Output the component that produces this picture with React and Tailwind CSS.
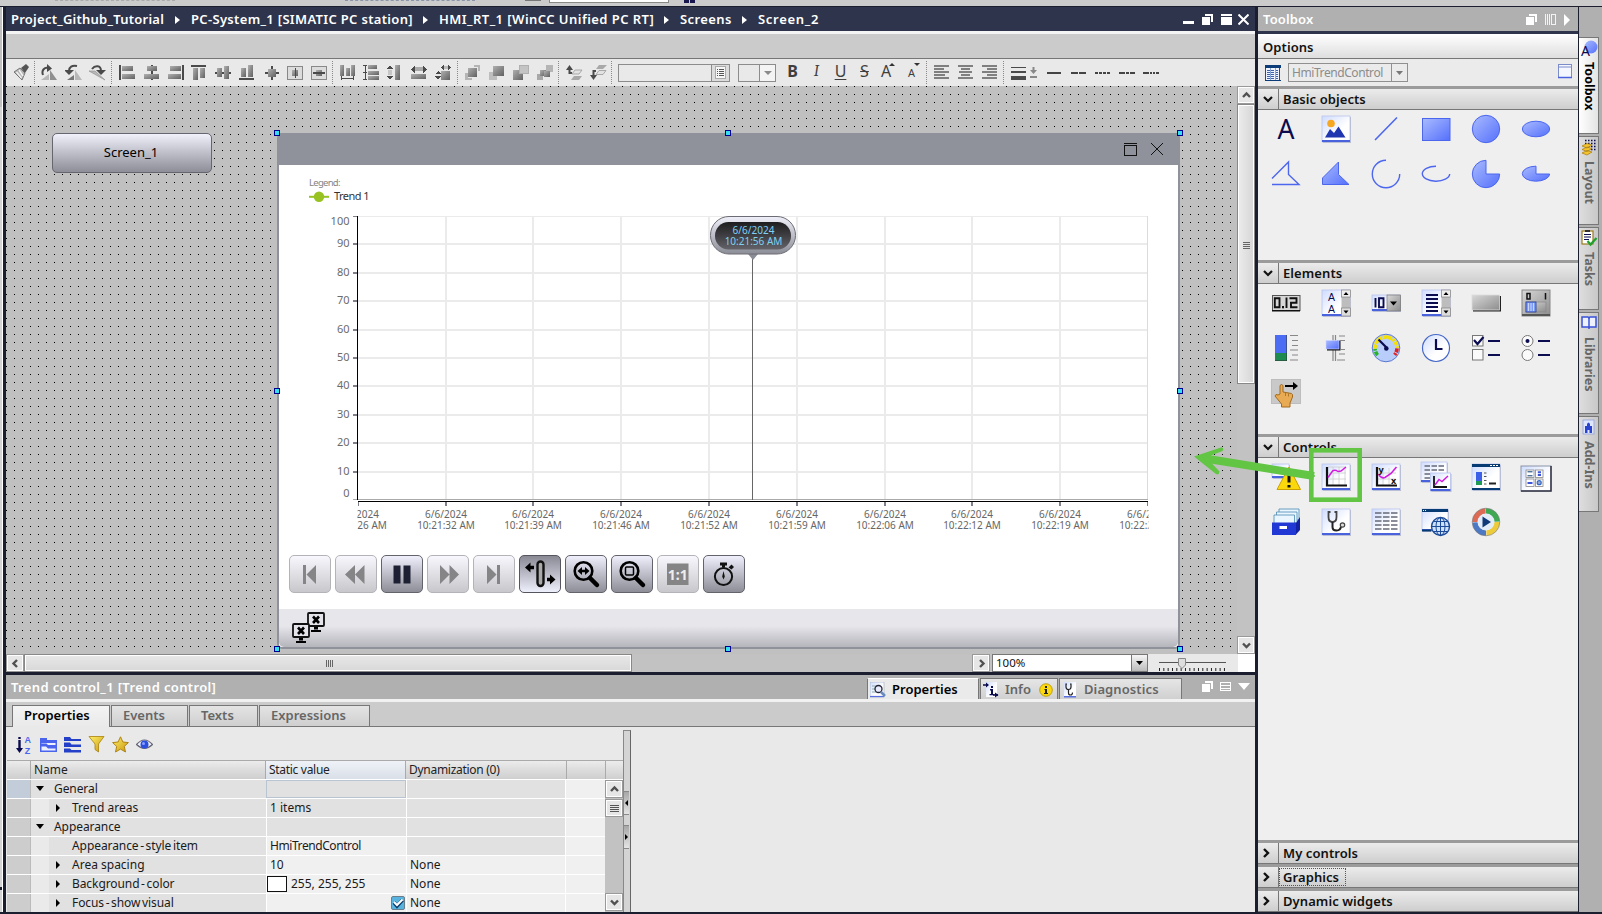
import React from "react";

const FONT = "font-['Noto_Sans','Open_Sans',sans-serif]";

/* ---------- shared gradients for every drawing ---------- */
function Defs() {
  return (
    <svg width="0" height="0" className="absolute">
      <defs>
        <linearGradient id="blue" x1="0" y1="0" x2="1" y2="1">
          <stop offset="0" stopColor="#a9bbff" />
          <stop offset="1" stopColor="#5570fb" />
        </linearGradient>
        <linearGradient id="tile" x1="0" y1="0" x2="1" y2="1">
          <stop offset="0" stopColor="#cfdcff" />
          <stop offset="0.6" stopColor="#ffffff" />
        </linearGradient>
        <linearGradient id="grey" x1="0" y1="0" x2="1" y2="1">
          <stop offset="0" stopColor="#d8d8d8" />
          <stop offset="1" stopColor="#8d8d8d" />
        </linearGradient>
        <linearGradient id="dark" x1="0" y1="0" x2="1" y2="1">
          <stop offset="0" stopColor="#b0b0b0" />
          <stop offset="1" stopColor="#606060" />
        </linearGradient>
        <linearGradient id="rim" x1="0" y1="0" x2="0" y2="1">
          <stop offset="0" stopColor="#f0f0fb" />
          <stop offset="1" stopColor="#8b8d96" />
        </linearGradient>
        <linearGradient id="core" x1="0" y1="0" x2="0" y2="1">
          <stop offset="0" stopColor="#1d1d1f" />
          <stop offset="1" stopColor="#626268" />
        </linearGradient>
        <linearGradient id="gold" x1="0" y1="0" x2="1" y2="1">
          <stop offset="0" stopColor="#fff06a" />
          <stop offset="1" stopColor="#c9960c" />
        </linearGradient>
      </defs>
    </svg>
  );
}

/* ---------- editor toolbar ---------- */
function T({ children, crisp = true }) {
  return (
    <svg className="h-[17px] w-[17px] shrink-0" viewBox="0 0 17 17" fill="url(#dark)" shapeRendering={crisp ? "crispEdges" : "auto"}>
      {children}
    </svg>
  );
}

function Sep({ className }) {
  return <div className={"h-[23px] w-0 shrink-0 border-l border-dotted border-[#8a8a8a] " + className} />;
}

const D = "#4a4a4a";

function Bars({ widths, align }) {
  return (
    <T>
      {widths.map((w, i) => (
        <rect key={i} x={align === "l" ? 1 : align === "r" ? 16 - w : (17 - w) / 2} y={1 + i * 3} width={w} height="2" fill="#808080" />
      ))}
    </T>
  );
}

function Dash({ d }) {
  return (
    <T>
      <path d="M0.5 9H16.5" stroke="#444" strokeWidth="2" strokeDasharray={d} fill="none" />
    </T>
  );
}

function EditorToolbar() {
  return (
    <div className="flex h-[27px] shrink-0 items-center bg-[#e9e9e9] pl-[7px]">
      <T crisp={false}>
        <path d="M1 8L7 4L12 9L9 16Z" fill="#b5b5b5" stroke="#777" />
        <path d="M3.500 8L8.500 14M6 6L10 12" stroke="#f2f2f2" strokeWidth="1.400" />
        <path d="M8 4L13 0L16 3L12 9Z" fill="#555" />
      </T>
      <Sep className="ml-1 mr-1.5" />
      <div className="flex gap-[7px]">
        <T crisp={false}>
          <path d="M16 16H9V6Z" fill="#8f8f8f" />
          <path d="M0 16H8V10Z" fill="#b8b8b8" />
          <path d="M2 11C0 6 4 3 7 4" stroke={D} strokeWidth="2" fill="none" />
          <path d="M6 0L11 4.500L6 8Z" fill={D} />
        </T>
        <T crisp={false}>
          <path d="M10 16H17L10 6Z" fill="#b8b8b8" />
          <path d="M2 16H9V11Z" fill="#777" />
          <path d="M12 2C7 1 4 3 4 7" stroke={D} strokeWidth="2" fill="none" />
          <path d="M-1 6H9L4 11Z" fill={D} />
        </T>
        <T crisp={false}>
          <path d="M0 7H6L16 16Z" fill="#b8b8b8" stroke="#8a8a8a" strokeWidth=".6" />
          <path d="M3 5C6 1 12 1 12 7" stroke={D} strokeWidth="2" fill="none" />
          <path d="M7 6H17L12 11Z" fill={D} />
        </T>
      </div>
      <Sep className="ml-[5px] mr-[7px]" />
      <div className="flex gap-[7px]">
        <T><rect x="0" y="1" width="2" height="15" fill={D} /><rect x="3" y="2" width="11" height="5" /><rect x="3" y="10" width="13" height="5" /></T>
        <T><rect x="8" y="1" width="2" height="15" fill={D} /><rect x="4" y="2" width="10" height="5" /><rect x="1" y="10" width="15" height="5" /></T>
        <T><rect x="15" y="1" width="2" height="15" fill={D} /><rect x="3" y="2" width="11" height="5" /><rect x="1" y="10" width="13" height="5" /></T>
        <T><rect x="0" y="1" width="15" height="2" fill={D} /><rect x="2" y="4" width="5" height="12" /><rect x="9" y="4" width="5" height="10" /></T>
        <T><rect x="0" y="8" width="16" height="2" fill={D} /><rect x="2" y="4" width="5" height="9" /><rect x="9" y="2" width="5" height="13" /></T>
        <T><rect x="0" y="14" width="15" height="2" fill={D} /><rect x="2" y="4" width="5" height="9" /><rect x="9" y="1" width="5" height="12" /></T>
        <T><rect x="8" y="2" width="2" height="14" fill={D} /><rect x="2" y="8" width="14" height="2" fill={D} /><rect x="5" y="5" width="8" height="8" /></T>
        <T><rect x=".5" y="2.500" width="15" height="13" fill="#dcdcdc" stroke="#888" /><rect x="5" y="6" width="6" height="6" /><rect x="8" y="4" width="1" height="10" fill={D} /></T>
        <T><rect x=".5" y="2.500" width="15" height="13" fill="#dcdcdc" stroke="#888" /><rect x="5" y="6" width="6" height="6" /><rect x="2" y="8" width="12" height="2" fill={D} /></T>
      </div>
      <Sep className="ml-1 mr-1.5" />
      <div className="flex gap-[7px]">
        <T><rect x="1" y="1" width="4" height="11" /><rect x="7" y="4" width="4" height="8" /><rect x="12" y="1" width="4" height="11" /><path d="M2.500 12v4M14.500 12v4M2 14.500h13" stroke={D} fill="none" /></T>
        <T><path d="M2.500 1v15M0 1.500h4M0 8.500h4M0 15.500h4" stroke={D} fill="none" /><rect x="5" y="1" width="9" height="4" /><rect x="5" y="7" width="11" height="4" /><rect x="5" y="12" width="11" height="4" /></T>
        <T><path d="M0 5L3 1L6 5ZM0 12L3 16L6 12Z" fill={D} /><rect x="1" y="6" width="4" height="5" fill="#c6c6c6" /><rect x="8" y="1" width="5" height="15" /></T>
        <T><path d="M0 5.500L4 2V9ZM16 5.500L12 2V9Z" fill={D} /><rect x="4" y="3" width="8" height="4" fill="#aaa" /><rect x="0" y="10" width="15" height="5" /></T>
        <T><path d="M6 3.500L9 0V7ZM16 3.500L13 0V7Z" fill={D} /><rect x="9" y="2" width="4" height="3" fill="#bbb" /><path d="M0 10L3 7L6 10ZM0 12L3 16L6 12Z" fill={D} /><rect x="6" y="7" width="9" height="9" /></T>
      </div>
      <Sep className="ml-[5px] mr-[7px]" />
      <div className="flex gap-[7px]">
        <T><path d="M0 9H3V14H7V16H0ZM9 1H15V7H13V3H9Z" fill="#b5b5b5" /><rect x="3" y="4" width="9" height="9" /></T>
        <T><rect x="0" y="8" width="8" height="8" fill="#bebebe" /><rect x="4" y="2" width="11" height="10" /></T>
        <T><rect x="0" y="6" width="10" height="10" /><rect x="6.500" y="1.500" width="9" height="8" fill="#c4c4c4" stroke="#b0b0b0" /></T>
        <T><rect x="9" y="1" width="7" height="7" fill="#b5b5b5" /><rect x="0" y="10" width="6" height="6" fill="#a8a8a8" /><rect x="3" y="6" width="6" height="6" /><rect x="7" y="7" width="6" height="6" /></T>
      </div>
      <Sep className="ml-1 mr-[7px]" />
      <div className="flex gap-[7px]">
        <T crisp={false}><path d="M0 6L3.500 1L7 6Z" fill={D} /><path d="M3.500 4V9H6" stroke={D} strokeWidth="2" fill="none" /><path d="M9 6H16L13 10H6Z" fill="#e2e2e2" stroke="#999" strokeWidth=".8" /><path d="M8 12H16L13 16H5Z" fill="#a8a8a8" /></T>
        <T crisp={false}><path d="M0 11L3.500 16L7 11Z" fill={D} /><path d="M3.500 13V7H6" stroke={D} strokeWidth="2" fill="none" /><path d="M9 1H17L13 5H6Z" fill="#a8a8a8" /><path d="M9 6.500H16L13 10.500H6Z" fill="#e2e2e2" stroke="#999" strokeWidth=".8" /></T>
      </div>
      <Sep className="ml-1 mr-1.5" />
      <div className="flex h-[18px] w-28 justify-end border border-[#8c8c8c] bg-[#e9e9e9]">
        <div className="flex w-[18px] items-center justify-center border-l border-[#8c8c8c] bg-[#dcdcdc]">
          <svg className="h-[13px] w-[11px]" viewBox="0 0 11 13" shapeRendering="crispEdges"><path d="M0.500 0.500H10.500V12.500H0.500Z" fill="#f6f6f6" stroke="#aaa" /><path d="M2 3.500h1M4 3.500h5M2 5.500h1M4 5.500h5M2 7.500h1M4 7.500h5M2 9.500h1M4 9.500h5" stroke="#555" /></svg>
        </div>
      </div>
      <div className="ml-2 flex h-[18px] w-[38px] justify-end border border-[#8c8c8c] bg-[#e9e9e9]">
        <div className="flex w-4 items-center justify-center border-l border-[#8c8c8c] bg-[#f4f4f4]">
          <svg className="h-1 w-2" viewBox="0 0 8 4"><path d="M0 0H8L4 4Z" fill="#8a8a8a" /></svg>
        </div>
      </div>
      <div className="ml-2 flex gap-[7px] text-[16px] leading-[17px] text-[#3f3f3f]">
        <span className="w-[17px] text-center font-bold">B</span>
        <span className="w-[17px] text-center font-serif italic">I</span>
        <span className="w-[17px] text-center underline underline-offset-2">U</span>
        <span className="w-[17px] text-center line-through">S</span>
        <span className="flex w-[17px] items-start pl-px">A<svg className="-ml-0.5 mt-0 h-[3px] w-[6px] shrink-0" viewBox="0 0 6 3"><path d="M0 3H6L3 0Z" fill="#333" /></svg></span>
        <span className="flex w-[17px] items-start pl-1 text-[11px] leading-[20px]">A<svg className="-ml-px mt-0 h-[3px] w-[6px] shrink-0" viewBox="0 0 6 3"><path d="M0 0H6L3 3Z" fill="#333" /></svg></span>
      </div>
      <Sep className="ml-[5px] mr-1.5" />
      <div className="flex gap-[7px]">
        <Bars widths={[15, 10, 15, 11, 15]} align="l" />
        <Bars widths={[15, 9, 13, 9, 15]} align="c" />
        <Bars widths={[15, 10, 15, 10, 15]} align="r" />
      </div>
      <Sep className="ml-[5px] mr-1.5" />
      <T><rect x="1" y="3" width="15" height="1" fill={D} /><rect x="1" y="7" width="15" height="2" fill={D} /><rect x="1" y="12" width="15" height="4" fill={D} /></T>
      <svg className="ml-[3px] h-[11px] w-[7px]" viewBox="0 0 7 11" fill="#888"><path d="M2.500 0h2v3H7L3.500 7L0 3h2.500ZM0 9h7v2H0Z" /></svg>
      <div className="ml-[9px] flex gap-[7px]">
        <Dash d="14 9" />
        <Dash d="7 1" />
        <Dash d="3 1" />
        <Dash d="6 1 3 1" />
        <Dash d="6 1 2 1 2 1" />
      </div>
    </div>
  );
}

/* ---------- title bar ---------- */
function Crumb({ children, className }) {
  return <span className={"shrink-0 whitespace-nowrap " + className}>{children}</span>;
}
function CrumbArrow() {
  return <svg className="mr-[11px] h-2 w-[5px] shrink-0" viewBox="0 0 5 8"><path d="M0 0L5 4L0 8Z" fill="#fff" /></svg>;
}
function RestoreGlyph() {
  return <svg className="h-[11px] w-[11px]" viewBox="0 0 11 11" fill="#fff" shapeRendering="crispEdges"><path d="M3 0H11V8H9V2H3Z" /><path d="M0 3H8V11H0Z" /></svg>;
}
function TitleBar() {
  return (
    <div className="flex h-6 shrink-0 items-center bg-[#2d344b] pl-[5px] pt-px text-[13px] font-semibold text-white">
      <Crumb className="w-[164px] tracking-[0.24px]">Project_Github_Tutorial</Crumb><CrumbArrow />
      <Crumb className="w-[232px] tracking-[0.33px]">PC-System_1 [SIMATIC PC station]</Crumb><CrumbArrow />
      <Crumb className="w-[225px] tracking-[0.45px]">HMI_RT_1 [WinCC Unified PC RT]</Crumb><CrumbArrow />
      <Crumb className="w-[62px] tracking-[0.4px]">Screens</Crumb><CrumbArrow />
      <Crumb className="tracking-[0.7px]">Screen_2</Crumb>
      <div className="ml-auto flex items-end gap-[8px] pr-1.5">
        <div className="mb-px h-[3px] w-[11px] bg-white" />
        <RestoreGlyph />
        <svg className="h-[11px] w-[11px]" viewBox="0 0 11 11" fill="#fff" shapeRendering="crispEdges"><path d="M0 0H11V2H0ZM0 3H11V11H0Z" /></svg>
        <svg className="-ml-0.5 h-[11px] w-[11px]" viewBox="0 0 11 11"><path d="M0.500 0.500L10.500 10.500M10.500 0.500L0.500 10.500" stroke="#fff" strokeWidth="2" /></svg>
      </div>
    </div>
  );
}

/* ---------- trend control ---------- */
const yLabels = [["100", 221], ["90", 243], ["80", 272], ["70", 300], ["60", 329], ["50", 357], ["40", 385], ["30", 414], ["20", 442], ["10", 471], ["0", 493]];
const yGrid = [244, 273, 301, 330, 358, 386, 415, 443, 472];
const xGrid = [446, 533, 621, 709, 797, 885, 972, 1060];
const xLabels = [["26", 358, "21"], ["32", 446, "21"], ["39", 533, "21"], ["46", 621, "21"], ["52", 709, "21"], ["59", 797, "21"], ["06", 885, "22"], ["12", 972, "22"], ["19", 1060, "22"], ["26", 1148, "22"]];

function TrendChart() {
  return (
    <svg className="block h-[390px] w-[899px] shrink-0" viewBox="279 165 899 390">
      <clipPath id="axis"><rect x="357.500" y="500" width="791" height="40" /></clipPath>
      <text x="309" y="186" fontSize="9.500" fill="#858585" textLength="31.500">Legend:</text>
      <path d="M309 196.800H329" stroke="#98c222" strokeWidth="2" />
      <circle cx="319" cy="196.800" r="5.200" fill="#98c222" />
      <text x="334" y="200" fontSize="11" fill="#333" textLength="35.500">Trend 1</text>
      <g shapeRendering="crispEdges">
        <g fill="#ebebeb">
          {yGrid.map((y) => <rect key={y} x="358" y={y - 1} width="790" height="2" />)}
          {xGrid.map((x) => <rect key={x} x={x - 1} y="216" width="2" height="284" />)}
          <rect x="358" y="216" width="790" height="1" />
        </g>
        <rect x="1147" y="216" width="1" height="284" fill="#dcdcdc" />
        <rect x="353" y="499" width="795" height="1" fill="#aaa" />
        <rect x="357" y="216" width="1" height="284" fill="#000" />
        <rect x="358" y="501" width="790" height="1" fill="#000" />
        <g fill="#80808a">
          {yGrid.map((y) => <rect key={y} x="353" y={y - 1} width="4" height="2" />)}
          <rect x="353" y="216" width="4" height="1" />
          {xGrid.map((x) => <rect key={x} x={x - 1} y="502" width="2" height="4" />)}
          <rect x="358" y="502" width="1" height="4" /><rect x="1147" y="502" width="1" height="4" />
        </g>
        <rect x="752" y="258" width="1" height="242" fill="#666" />
      </g>
      <g fontSize="11" fill="#6b6b6b" textAnchor="end">
        {yLabels.map(([t, y]) => <text key={t} x="349.500" y={y + 4}>{t}</text>)}
      </g>
      <g fontSize="10" fill="#666" textAnchor="middle" clipPath="url(#axis)">
        {xLabels.map(([s, x, m]) => (
          <g key={x}>
            <text x={x} y="518">6/6/2024</text>
            <text x={x} y="529">{"10:" + m + ":" + s + " AM"}</text>
          </g>
        ))}
      </g>
      <path d="M748 254H758L753 260Z" fill="#8b8d96" />
      <rect x="710.500" y="216.500" width="85" height="37.500" rx="18.500" fill="url(#rim)" stroke="#6c6c74" />
      <rect x="715" y="222" width="76" height="27.500" rx="13.500" fill="url(#core)" />
      <g fontSize="10" fill="#7fd0f2" textAnchor="middle">
        <text x="753.500" y="234">6/6/2024</text>
        <text x="753.500" y="245">10:21:56 AM</text>
      </g>
    </svg>
  );
}

const btnStyles = {
  on: "border-[#63636b] bg-gradient-to-b from-[#eff0fc] to-[#8e8e98]",
  off: "border-[#b4b4b8] bg-gradient-to-b from-[#f7f7fd] to-[#c8c8cc]",
  pressed: "border-[#55555f] bg-gradient-to-b from-[#8a8a95] to-[#eef0fc]",
};
function PlayBtn({ kind = "on", children }) {
  return (
    <div className={"flex h-[38px] w-[42px] items-center justify-center rounded-[5px] border " + btnStyles[kind]}>
      <svg className="h-9 w-10" viewBox="0 0 40 36">{children}</svg>
    </div>
  );
}

function TrendButtons() {
  return (
    <div className="flex gap-1 pl-[10px]">
      <PlayBtn kind="off"><path d="M13 9h3v19h-3zM26 9v19L16.500 18.500z" fill="#858588" /></PlayBtn>
      <PlayBtn kind="off"><path d="M19 9v19L9 18.500zM28.500 9v19L19 18.500z" fill="#858588" /></PlayBtn>
      <PlayBtn><path d="M11.500 9.500h7v18h-7zM21.500 9.500h7v18h-7z" fill="#1d2033" /></PlayBtn>
      <PlayBtn kind="off"><path d="M12 9v19l9.500-9.500zM21.500 9v19l9.500-9.500z" fill="#858588" /></PlayBtn>
      <PlayBtn kind="off"><path d="M23 9h3v19h-3zM13 9v19l9.500-9.500z" fill="#858588" /></PlayBtn>
      <PlayBtn kind="pressed">
        <rect x="17.500" y="5.500" width="6" height="24.500" rx="3" fill="#aaa" stroke="#111" strokeWidth="2.400" />
        <path d="M5 11.500L10.500 6.500v3.300H14v3.400h-3.500v3.300zM35.500 23.500L30 18.500v3.300H27v3.400h3v3.300z" fill="#000" />
      </PlayBtn>
      <PlayBtn>
        <circle cx="17.500" cy="15" r="8.800" fill="none" stroke="#000" strokeWidth="2.600" />
        <path d="M24 22L31 29" stroke="#000" strokeWidth="4.500" strokeLinecap="round" />
        <path d="M11.500 15L16 11v2.800h3V11l4.500 4L19 19v-2.800h-3V19z" />
      </PlayBtn>
      <PlayBtn>
        <circle cx="17.500" cy="15" r="8.800" fill="none" stroke="#000" strokeWidth="2.600" />
        <path d="M24 22L31 29" stroke="#000" strokeWidth="4.500" strokeLinecap="round" />
        <rect x="13.500" y="11" width="8" height="8" rx="1" fill="none" stroke="#000" strokeWidth="1.500" />
      </PlayBtn>
      <PlayBtn kind="off">
        <rect x="9" y="7.500" width="21.500" height="21.500" fill="#858585" />
        <text x="19.700" y="23.500" fontSize="14" fontWeight="bold" fill="#eee" textAnchor="middle">1:1</text>
      </PlayBtn>
      <PlayBtn>
        <circle cx="19.500" cy="20.500" r="8.600" fill="none" stroke="#111" strokeWidth="2" />
        <path d="M16 6.500h7v3h-2v2h-3v-2h-2zM24.500 11.500l3-3 2.500 2.500-2.500 2.500M19.500 15l1.300 5.500-1.300 3-1.300-3z" fill="#111" />
      </PlayBtn>
    </div>
  );
}

function Monitor({ x, y }) {
  return (
    <g transform={`translate(${x} ${y})`}>
      <rect x="1" y="1" width="16" height="13" rx="1" fill="#e4e4ea" stroke="#111" strokeWidth="1.800" />
      <path d="M6 4.500L12 11M12 4.500L6 11" stroke="#000" strokeWidth="2.600" />
      <path d="M7 15h4v2.500H7zM4 18h10v2H4z" fill="#000" />
    </g>
  );
}

function TrendWindow() {
  return (
    <div className="absolute left-[271px] top-[47px] flex h-[516px] w-[903px] flex-col rounded-[5px] border-x-2 border-b-2 border-[#8f929b] bg-white">
      <div className="flex h-8 shrink-0 items-center justify-end bg-[#8f929b] pr-[15px] pt-1">
        <svg className="mt-[-4px] h-[13px] w-[13px]" viewBox="0 0 13 13" shapeRendering="crispEdges"><path d="M0 .5H13M.5 2.500H12.500V12.500H.5Z" stroke="#111" fill="none" /></svg>
        <svg className="ml-[14px] mt-[-4px] h-3 w-3" viewBox="0 0 12 12"><path d="M0 0L12 12M12 0L0 12" stroke="#111" /></svg>
      </div>
      <TrendChart />
      <TrendButtons />
      <div className="mt-auto h-[38px] rounded-b-[5px] bg-gradient-to-b from-[#e6e6eb] from-45% to-[#b5b5bc] pl-[13px] pt-[3px]">
        <svg className="h-8 w-9" viewBox="0 0 36 32">
          <Monitor x={15} y={0} />
          <Monitor x={0} y={11} />
        </svg>
      </div>
    </div>
  );
}

const handles = ["left-[268px] top-[44px]", "left-[719px] top-[44px]", "left-[1171px] top-[44px]", "left-[268px] top-[302px]", "left-[1171px] top-[302px]", "left-[268px] top-[560px]", "left-[719px] top-[560px]", "left-[1171px] top-[560px]"];

function Canvas() {
  return (
    <div className="relative h-[568px] w-[1231px] bg-[#c0c0c0] bg-[conic-gradient(at_1px_1px,transparent_75%,#000_75%)] bg-[size:8px_8px]">
      <div className="absolute left-[46px] top-[47px] flex h-10 w-40 items-center justify-center rounded-[5px] border border-[#666670] bg-gradient-to-b from-[#f1f1fc] to-[#8e8e98] pr-0.5 text-[13px] text-black">Screen_1</div>
      <TrendWindow />
      {handles.map((h) => <div key={h} className={"absolute h-1.5 w-1.5 border border-[#000090] bg-[#35dff0] " + h} />)}
    </div>
  );
}

/* ---------- scrollbars ---------- */
const chev = { up: "M2 6L5.500 2.500L9 6", down: "M2 2.500L5.500 6L9 2.500", left: "M7 1L3.500 4.500L7 8", right: "M4 1L7.500 4.500L4 8" };
function ScrollBtn({ dir, className = "" }) {
  return (
    <div className={"flex h-[18px] w-[18px] shrink-0 items-center justify-center border border-[#999] bg-[#e6e6e6] shadow-[inset_0_0_0_1px_#fff] " + className}>
      <svg className="h-[9px] w-[11px]" viewBox="0 0 11 9"><path d={chev[dir]} stroke="#505050" strokeWidth="2.400" fill="none" /></svg>
    </div>
  );
}

function HScroll() {
  return (
    <div className="flex h-[18px] shrink-0 bg-[#c2c2c2]">
      <ScrollBtn dir="left" />
      <div className="flex h-[18px] w-[608px] items-center justify-center border border-[#888] bg-gradient-to-b from-[#e8e8e8] to-[#d8d8d8] pl-0.5 shadow-[inset_0_0_0_1px_#fff]">
        <div className="flex gap-px">{[0, 1, 2, 3].map((i) => <div key={i} className="h-[7px] w-px bg-[#666]" />)}</div>
      </div>
      <div className="grow" />
      <ScrollBtn dir="right" className="mr-0.5" />
      <div className="flex w-[156px] justify-between border border-[#777] bg-white pl-[3px] text-[11.500px] leading-[16px] text-[#111]">
        100%
        <div className="flex w-4 items-center justify-center border-l border-[#777] bg-gradient-to-b from-[#f6f6f6] to-[#bbb]">
          <svg className="h-1 w-[7px]" viewBox="0 0 7 4"><path d="M0 0H7L3.500 4Z" /></svg>
        </div>
      </div>
      <div className="w-[90px] bg-[#e9e9e9] pl-[11px]">
        <svg className="h-[18px] w-[68px]" viewBox="0 0 68 18" shapeRendering="crispEdges">
          <path d="M0 8.500H67" stroke="#555" />
          <path d="M0 15.500H67" stroke="#222" strokeWidth="3" strokeDasharray="1 3.330" shapeRendering="auto" />
          <path d="M19.500 4.500H26.500V11L23 14.500L19.500 11Z" fill="#ddd" stroke="#888" shapeRendering="auto" />
        </svg>
      </div>
      <div className="w-[17px] bg-white" />
    </div>
  );
}

function VScroll() {
  return (
    <div className="flex w-[18px] flex-col bg-[#c2c2c2]">
      <ScrollBtn dir="up" />
      <div className="flex h-[280px] w-[18px] flex-col items-center justify-center gap-px border border-[#888] bg-gradient-to-r from-[#ececec] to-[#d6d6d6] pt-0.5 shadow-[inset_0_0_0_1px_#fff]">
        {[0, 1, 2, 3].map((i) => <div key={i} className="h-px w-[7px] bg-[#666]" />)}
      </div>
      <div className="grow" />
      <ScrollBtn dir="down" />
    </div>
  );
}

/* ---------- inspector ---------- */
function InfoTab({ className, children }) {
  return <div className={"flex h-[21px] items-center border-x border-t border-[#777] pt-px text-[13px] font-semibold " + className}>{children}</div>;
}

function InspectorTitle() {
  return (
    <div className="flex h-6 shrink-0 items-end bg-[#b0b0b0] pl-[5px]">
      <div className="w-[856px] self-center pt-px text-[13px] font-semibold tracking-[0.35px] text-white">Trend control_1 [Trend control]</div>
      <InfoTab className="w-28 border-t-white bg-[#eaeaea] pl-0.5 text-black">
        <svg className="h-4 w-4" viewBox="0 0 16 16"><rect width="14" height="15" fill="url(#tile)" stroke="#9ab" strokeWidth=".6" /><path d="M0 14.500H14" stroke="#5a70e0" strokeWidth="1.200" /><path d="M2 4h5M2 7h4M2 10h4" stroke="#8aa" /><circle cx="8.500" cy="7" r="3.500" fill="#e8ecff" stroke="#223" strokeWidth="1.300" /><path d="M11 10L15 14" stroke="#6a8ac0" strokeWidth="2.500" /></svg>
        <span className="ml-[6px]">Properties</span>
      </InfoTab>
      <InfoTab className="ml-px w-[78px] bg-gradient-to-b from-[#e6e6e6] to-[#d0d0d0] pl-0.5 text-[#666]">
        <svg className="h-4 w-4" viewBox="0 0 16 16"><rect x="3" y="0" width="11" height="15" fill="url(#tile)" /><path d="M0 3H5M10 13H15" stroke="#0a0a50" strokeWidth="1.600" /><path d="M3 0.500L6 3L3 5.500ZM12 10.500L15.500 13L12 15.500Z" fill="#0a0a50" /><path d="M8 4h2v2H8zM7 7h3v5h1.500v1.200h-5V12H8V8.500H7z" fill="#0a0a50" /></svg>
        <span className="ml-[6px]">Info</span>
        <svg className="ml-[8px] h-[14px] w-[14px]" viewBox="0 0 14 14"><circle cx="7" cy="7" r="6.300" fill="#fbd90e" stroke="#b09000" strokeWidth=".8" /><path d="M6 3h2v2H6zM5.500 6H8v4h1v1H5v-1h1V7h-.5z" fill="#222" /></svg>
      </InfoTab>
      <InfoTab className="ml-px w-[123px] bg-gradient-to-b from-[#e6e6e6] to-[#d0d0d0] pl-1 text-[#666]">
        <svg className="h-4 w-3" viewBox="0 0 12 16"><rect width="12" height="15" fill="url(#tile)" /><rect y="14" width="12" height="1.500" fill="#5a70e0" /><path d="M3 2H2V5Q2 7.500 4.500 7.500Q7 7.500 7 5V2H6M4.500 8V11Q4.500 13 6.500 13Q8.500 13 8.500 10.500" stroke="#222" fill="none" strokeWidth="1.200" /></svg>
        <span className="ml-[8px] tracking-[0.1px]">Diagnostics</span>
      </InfoTab>
      <div className="ml-auto mb-[7px] flex items-center gap-[7px] pr-[5px]">
        <RestoreGlyph />
        <svg className="h-[11px] w-[11px]" viewBox="0 0 11 11" shapeRendering="crispEdges"><path d="M0 1.500H11M0 4.500H11M0 7H11M0 9.500H11M.5 1V10M10.500 1V10" stroke="#fff" /></svg>
        <svg className="h-[7px] w-3" viewBox="0 0 12 7"><path d="M0 0H12L6 7Z" fill="#fff" /></svg>
      </div>
    </div>
  );
}

function SubTab({ active, className, children }) {
  return (
    <div className={"flex items-center border-x border-t border-[#777] pl-[11px] text-[13px] font-semibold " + (active ? "-mb-px h-[22px] bg-gradient-to-b from-[#f4f4f4] to-[#e9e9e9] pb-px text-black " : "h-[21px] bg-gradient-to-b from-[#e4e4e4] to-[#cfcfcf] text-[#666] ") + className}>
      {children}
    </div>
  );
}

const rows = [
  { level: 0, name: "General", selected: true },
  { level: 1, name: "Trend areas", value: "1 items", arrow: true },
  { level: 0, name: "Appearance" },
  { level: 1, name: "Appearance - style item", value: "HmiTrendControl", light: true, tight: true },
  { level: 1, name: "Area spacing", value: "10", arrow: true, dyn: "None", light: true },
  { level: 1, name: "Background - color", value: "255, 255, 255", swatch: true, arrow: true, dyn: "None", light: true },
  { level: 1, name: "Focus - show visual", check: true, arrow: true, dyn: "None", light: true },
];

function Row({ r }) {
  return (
    <div className="flex h-[19px] border-b border-white text-[12px] leading-[18px] text-[#1a1a1a]">
      <div className={"w-6 border-r border-[#bbb] " + (r.selected ? "bg-[#c3cdda]" : "bg-[#cdcdcd]")} />
      {r.level === 0 ? (
        <div className="flex w-[235px] items-center bg-[#e1e1e1] pl-[5px]">
          <svg className="mb-0.5 h-[5px] w-2" viewBox="0 0 8 5"><path d="M0 0H8L4 5Z" /></svg>
          <span className="ml-[10px] tracking-[-0.08px]">{r.name}</span>
        </div>
      ) : (
        <>
          <div className="w-[18px] bg-[#eaeaea]" />
          <div className="flex w-[217px] items-center bg-[#e1e1e1] pl-[7px]">
            {r.arrow ? <svg className="h-2 w-1" viewBox="0 0 4 8"><path d="M0 0L4 4L0 8Z" /></svg> : <div className="w-1" />}
            <span className={"ml-[12px] " + (r.name.includes(" - ") ? "tracking-[-0.08px] [word-spacing:-1.4px]" : "")}>{r.name}</span>
          </div>
        </>
      )}
      <div className={"flex w-[140px] items-center whitespace-nowrap border-l " + (r.selected ? "border border-[#b9c4d2] bg-[#e1e1e1]" : r.light ? "border-white bg-[#f0f0f0]" : "border-white bg-[#e1e1e1]")}>
        {r.swatch && <div className="h-4 w-5 border border-[#111] bg-white" />}
        {r.value && <span className={r.tight ? "ml-[3px] tracking-[-0.42px]" : r.swatch ? "ml-1" : "ml-[3px]"}>{r.value}</span>}
        {r.check && (
          <svg className="ml-auto mr-px h-[14px] w-[14px]" viewBox="0 0 14 14"><rect x=".5" y=".5" width="13" height="13" rx="1.500" fill="#58b4de" stroke="#6a7f8c" /><path d="M3 6.500L6 10L11.500 4" stroke="#0c3c6c" strokeWidth="3.600" fill="none" /><path d="M3 6L6 9L11.500 3.500" stroke="#fff" strokeWidth="2" fill="none" /></svg>
        )}
      </div>
      <div className={"w-[160px] border-x border-white pl-[3px] " + (r.dyn ? "bg-[#f0f0f0]" : "bg-[#e1e1e1]")}>{r.dyn}</div>
      <div className="grow bg-[#f0f0f0]" />
    </div>
  );
}

const head = "border-r border-[#aaa] bg-gradient-to-b from-[#ececec] via-[#dcdcdc] to-[#cfcfcf] leading-[18px]";

function PropertyTable() {
  return (
    <div className="flex w-[617px] flex-col pl-px">
      <div className="flex h-[33px] shrink-0 items-center gap-[7px] pl-[9px] pt-[2px]">
        <svg className="h-[18px] w-[17px] overflow-visible" viewBox="0 0 17 18"><path d="M3.500 1V13" stroke="#0a0a50" strokeWidth="2.400" strokeDasharray="2 1 20" /><path d="M0 12H7L3.500 17Z" fill="#0a0a50" /><g className="font-['Liberation_Sans',sans-serif] text-[9px] font-bold" fill="#4a66f0"><text x="8.500" y="7">A</text><text x="8.800" y="18">Z</text></g></svg>
        <svg className="h-[17px] w-[17px]" viewBox="0 0 17 17"><path d="M0 2H7V4H17V16H0Z" fill="#4a64ee" /><path d="M1.500 7H15.500V9H8L6.500 7.500H1.500ZM1.500 10.500H6L8 12.500H15.500V14.500H1.500Z" fill="#eef2ff" /></svg>
        <svg className="h-[17px] w-[17px]" viewBox="0 0 17 17"><path d="M0 1H6L7.500 3H17V5H0ZM0 6.500H6L7.500 8.500H17V11H0ZM0 12.500H6L7.500 14H17V16.500H0Z" fill="#2440c8" /></svg>
        <svg className="h-[17px] w-[17px]" viewBox="0 0 17 17"><path d="M1 0.500H16L10.500 8V16L7 13.500V8Z" fill="url(#gold)" stroke="#a88208" strokeWidth=".8" /></svg>
        <svg className="h-[17px] w-[17px]" viewBox="0 0 17 17"><path d="M8.500 .8L10.900 6L16.400 6.600L12.300 10.400L13.500 16L8.500 13.100L3.500 16L4.700 10.400L.6 6.600L6.100 6Z" fill="url(#gold)" stroke="#a87a08" strokeWidth=".9" /></svg>
        <svg className="h-[17px] w-[17px]" viewBox="0 0 17 17"><path d="M0.500 8.500Q8.500 -0.500 16.500 8.500Q8.500 16 0.500 8.500Z" fill="#f2f4ff" stroke="#667" strokeWidth="1.200" /><circle cx="8.500" cy="8.500" r="4" fill="#2d4fe0" /><circle cx="7.500" cy="7.500" r="1.500" fill="#8aa0ff" /></svg>
      </div>
      <div className="flex h-5 shrink-0 border-b border-t border-b-white border-t-[#aaa] text-[12px] text-[#222]">
        <div className={"w-6 " + head} />
        <div className={"w-[235px] pl-[3px] " + head}>Name</div>
        <div className="w-[140px] border-r border-[#aaa] bg-gradient-to-b from-[#eff3f8] to-[#d9dfe8] pl-[3px] leading-[18px] tracking-[-0.3px]">Static value</div>
        <div className={"w-[161px] pl-[3px] tracking-[-0.28px] " + head}>Dynamization (0)</div>
        <div className={"w-[39px] " + head} />
        <div className="w-[17px] bg-gradient-to-b from-[#ececec] to-[#cfcfcf]" />
      </div>
      <div className="flex h-[132px] overflow-hidden">
        <div className="w-[598px]">{rows.map((r) => <Row key={r.name} r={r} />)}</div>
        <div className="flex w-[18px] flex-col bg-[#c2c2c2]">
          <ScrollBtn dir="up" />
          <div className="mt-px flex h-[18px] shrink-0 flex-col items-center justify-center gap-px border border-[#999] bg-[#e6e6e6] shadow-[inset_0_0_0_1px_#fff]">
            {[0, 1, 2, 3].map((i) => <div key={i} className="h-px w-[9px] bg-[#555]" />)}
          </div>
          <div className="grow" />
          <ScrollBtn dir="down" className="mb-px" />
        </div>
      </div>
    </div>
  );
}

function SplitBtn({ d, className }) {
  return (
    <div className={"flex h-6 items-center justify-center border-y border-[#888] bg-gradient-to-b from-[#a8a8a8] to-[#e4e4e4] " + className}>
      <svg className="h-[6px] w-[3px]" viewBox="0 0 3 6"><path d={d} /></svg>
    </div>
  );
}

function Inspector() {
  return (
    <div className="flex min-h-0 grow flex-col overflow-hidden">
      <InspectorTitle />
      <div className="h-[3px] shrink-0 bg-[#f1f1f1]" />
      <div className="flex h-[25px] shrink-0 items-end gap-px border-b border-[#777] bg-[#cbcbcb] pl-[6px]">
        <SubTab active className="w-[98px]">Properties</SubTab>
        <SubTab className="w-[77px]">Events</SubTab>
        <SubTab className="w-[69px]">Texts</SubTab>
        <SubTab className="w-[111px]">Expressions</SubTab>
      </div>
      <div className="flex min-h-0 grow bg-[#e9e9e9]">
        <PropertyTable />
        <div className="mt-[3px] w-2 border border-b-0 border-[#888] border-r-[#666] bg-[#d4d4d4] pr-px">
          <SplitBtn d="M3 0V6L0 3Z" className="mt-[60px]" />
          <SplitBtn d="M0 0V6L3 3Z" className="mt-[10px]" />
        </div>
      </div>
    </div>
  );
}

/* ---------- toolbox ---------- */
function I({ children }) {
  return <svg className="h-8 w-8 overflow-visible" viewBox="0 0 32 32">{children}</svg>;
}
const N = "#0b0b50";
function Tile({ x = 2, y = 3, w = 28, h = 26, children }) {
  return (
    <>
      <rect x={x + 1} y={y + 1} width={w} height={h} fill="#b8bcc8" />
      <rect x={x} y={y} width={w} height={h} fill="url(#tile)" stroke="#b9c4ee" strokeWidth=".8" />
      {children}
      <rect x={x} y={y + h - 2} width={w} height="2" fill="#4a63dc" />
    </>
  );
}
const B = { fill: "url(#blue)", stroke: "#4c66ee", strokeWidth: 1 };
const BL = { fill: "none", stroke: "#4c66ee", strokeWidth: 1.4 };

function BasicObjects() {
  return (
    <>
      <I><text x="16" y="26" fontSize="27" fill={N} textAnchor="middle" textLength="17" lengthAdjust="spacingAndGlyphs">A</text></I>
      <I><Tile><circle cx="11" cy="10.500" r="3.800" fill="#f7a823" /><path d="M5 24.500L10 16L14 20L18.500 13.500L25.500 24.500Z" fill="#2036b0" /></Tile></I>
      <I><path d="M5 27L27 4.500" stroke="#4c66ee" strokeWidth="1.600" /></I>
      <I><rect x="2.500" y="5.500" width="27.500" height="22" {...B} /></I>
      <I><circle cx="16" cy="16" r="13.700" {...B} /></I>
      <I><ellipse cx="16" cy="16" rx="13.700" ry="7.800" {...B} /></I>
      <I><path d="M2 20.500L18.500 4V16.500L29 26.500H2" {...BL} /></I>
      <I><path d="M2.500 26.500V20L18.500 4V16.500L29 26.500Z" {...B} /></I>
      <I><path d="M16 2.300A13.700 13.700 0 1 0 29.700 16" {...BL} /></I>
      <I><path d="M16 8.200A13.700 7.500 0 1 0 29.700 16" {...BL} /></I>
      <I><path d="M16 16V2.300A13.700 13.700 0 1 0 29.700 16Z" {...B} /></I>
      <I><path d="M16 16V8.200A13.700 7.500 0 1 0 29.700 16Z" {...B} /></I>
    </>
  );
}

function Spinner() {
  return (
    <g>
      <rect x="21.500" y="3" width="9" height="26" fill="#bdbdbd" />
      <rect x="21.500" y="3" width="9" height="7" fill="#eee" stroke="#777" strokeWidth=".6" /><rect x="21.500" y="21" width="9" height="8" fill="#ddd" stroke="#777" strokeWidth=".6" />
      <path d="M23.500 8H28.500L26 5ZM23.500 23.500H28.500L26 26.500Z" />
    </g>
  );
}

const gaugeTicks = [[-220, -185, "#28b428"], [-183, -40, "#f6e000"], [-35, 0, "#f6e000"], [2, 38, "#e02020"]];
function arc(a, b, r) {
  const p = (d) => [16 + r * Math.cos((d * Math.PI) / 180), 16 + r * Math.sin((d * Math.PI) / 180)];
  const [x1, y1] = p(a);
  const [x2, y2] = p(b);
  return `M${x1} ${y1}A${r} ${r} 0 0 1 ${x2} ${y2}`;
}

function Elements() {
  return (
    <>
      <I>
        <rect x="2.500" y="8.500" width="27.500" height="15" fill="#d6d6d6" stroke="#555" /><rect x="2" y="23" width="28" height="1.500" fill="#111" />
        <path d="M4.800 11.300H9.500V20.300H4.800ZM16.500 10.500V21M19.500 11.300H27M22 11.300M21 11.300H26.500V15.800H21V20.300H27.500" stroke="#111" strokeWidth="1.900" fill="none" />
        <rect x="12" y="19" width="2" height="2.300" fill="#111" />
      </I>
      <I><Tile><g className="font-['Liberation_Sans',sans-serif] text-[10.500px]" fill={N} textAnchor="middle"><text x="11.500" y="14">A</text><text x="11.500" y="26">A</text></g></Tile><Spinner /></I>
      <I><Tile y={8} h={16}><path d="M5.500 11V20.500M9 11.300H13.500V20.200H9Z" stroke={N} strokeWidth="1.900" fill="none" /></Tile><rect x="17" y="8" width="13.500" height="16" fill="url(#grey)" stroke="#777" strokeWidth=".7" /><path d="M20 14.500H27L23.500 18.500Z" /></I>
      <I><Tile><path d="M6 8H18M6 12H18M6 16H18M6 20H18M6 24H18" stroke={N} strokeWidth="2" /></Tile><Spinner /></I>
      <I><rect x="3" y="9" width="28" height="15.500" fill="#222" /><rect x="2" y="8" width="27.500" height="15" fill="url(#grey)" stroke="#ddd" strokeWidth=".8" /></I>
      <I><rect x="2" y="3" width="28" height="26" fill="url(#grey)" stroke="#888" /><rect x="2" y="27" width="28" height="2" fill="#555" /><path d="M7 6.500H10V12H7ZM25.500 6V12.500" stroke="#111" strokeWidth="1.500" fill="none" /><rect x="6" y="15" width="20" height="10" fill="url(#grey)" stroke="#888" strokeWidth=".7" /><rect x="6" y="15" width="10" height="10" fill="#7d9cf6" stroke="#223a9a" strokeWidth=".8" /><path d="M8.500 16V24M11 16V24M13.500 16V24" stroke="#c6d6ff" /></I>
      <I><rect x="5" y="3" width="12" height="26" fill="#333" /><rect x="5" y="3" width="11.500" height="18" fill="#4c6cf4" /><rect x="5" y="21" width="11.500" height="7.500" fill="#1f8a50" /><path d="M20 3.500H28M22 8.500H28M22 13.500H28M20 18H28M22 23H28M20 28H28" stroke="#888" strokeWidth="1.200" /></I>
      <I><path d="M13 3V29M15.500 3V29M19 4H25M17 8.500H25M19 22H25M17 28H25M21 17.500H25" stroke="#888" strokeWidth="1.200" /><rect x="7" y="9" width="13.500" height="9.500" fill="#111" /><rect x="6" y="8.500" width="13" height="8.500" fill="url(#blue)" stroke="#ccd6ff" strokeWidth=".6" /></I>
      <I><circle cx="16" cy="16" r="13.800" fill="#b9cdfb" stroke="#5b78cf" />{gaugeTicks.map(([a, b, c]) => <path key={a} d={arc(a, b, 11)} stroke={c} strokeWidth="3.600" fill="none" strokeDasharray="4 .9" />)}<path d="M8.500 7.500L17 16" stroke={N} strokeWidth="2.200" /><circle cx="16.300" cy="16.500" r="2.300" fill={N} /></I>
      <I><circle cx="16" cy="16" r="13.500" fill="url(#tile)" stroke="#4668c8" strokeWidth="1.200" /><path d="M16 7V17H22.500" stroke={N} strokeWidth="2.200" fill="none" /></I>
      <I><g fill="#fafafa" stroke="#777"><rect x="2.500" y="3.500" width="10.500" height="10.500" /><rect x="2.500" y="17.500" width="10.500" height="10.500" /></g><path d="M4 8L7.500 12L13.500 5M18 9H30M18 23H30" stroke={N} strokeWidth="2.200" fill="none" /></I>
      <I><g fill="#fafafa" stroke="#777"><circle cx="7.500" cy="9" r="5.500" /><circle cx="7.500" cy="23" r="5.500" /></g><circle cx="7.500" cy="9" r="2" fill={N} /><path d="M18 9H30M18 23H30" stroke={N} strokeWidth="2.200" /></I>
      <I><rect x="1.500" y="2.500" width="29" height="24" fill="#c9c9c9" stroke="#bdbdbd" /><path d="M15 9H24" stroke="#000" strokeWidth="2" /><path d="M23 5L28 9L23 13Z" /><path d="M10 17V8.500Q11.500 6.500 13 8.500V15L21.500 16.500Q23 17 22.500 20L20 26V30H11.500V27L5 19Q5.500 16.500 8 18Z" fill="#e8aa52" stroke="#a06a20" /><path d="M15.500 16V19M18.500 16.500V19.500" stroke="#a06a20" strokeWidth=".8" /></I>
    </>
  );
}

const plot = "M7 6V24.500H27";
function Controls() {
  return (
    <>
      <I><Tile x={2} y={3} w={17} h={14} /><path d="M19 6L30.500 28.500H7Z" fill="#fbd80c" stroke="#caa000" /><path d="M17.500 14h3v7.500h-3zM17.500 24h3v2.500h-3z" fill="#111" /></I>
      <I><Tile><path d="M8 6H26M8 12H26M8 18H26M13 6V24M19 6V24M25 6V24" stroke="#ccc" strokeWidth=".8" /><path d={plot} stroke="#111" strokeWidth="2.200" fill="none" /><path d="M8 16.500L12.500 10Q15 8.500 18 10.500L21 10L26 6" stroke="#d21be0" strokeWidth="1.500" fill="none" /></Tile></I>
      <I><Tile><path d="M7 12H26M7 18H26M13 7V24M19 7V24" stroke="#ccc" strokeWidth=".8" /><path d={plot} stroke="#111" strokeWidth="2.200" fill="none" /><path d="M8.500 13Q11 18 15 16.500L21 12.500L26.500 6" stroke="#d21be0" strokeWidth="1.600" fill="none" /><text x="8.500" y="11.500" fontSize="9" fontWeight="bold" fill="#111">y</text><text x="21" y="22.500" fontSize="9" fontWeight="bold" fill="#111">x</text></Tile></I>
      <I><Tile x={1} y={1} w={26} h={20}><path d="M4.500 5H25M4.500 9H25M4.500 13H10M4.500 17H10" stroke="#666a78" strokeWidth="1.500" strokeDasharray="5.500 1.500" /></Tile><Tile x={10.500} y={12} w={20} h={18}><path d="M14 15V26H27" stroke="#111" strokeWidth="1.800" fill="none" /><path d="M15 24L19 18.500L22 20.500L28 15" stroke="#d21be0" strokeWidth="1.500" fill="none" /></Tile></I>
      <I><Tile /><rect x="2" y="3" width="28" height="3" fill="#073b73" /><path d="M20 4.500H29" stroke="#fff" strokeDasharray="2 1" /><rect x="2" y="27" width="28" height="2" fill="#073b73" /><rect x="6" y="11" width="6" height="9" fill="#3d60e8" /><rect x="6" y="20" width="6" height="4" fill="#1f9a55" /><path d="M14 12H16.500M14 15.500H16.500M14 19.500H16.500M14 23H16.500" stroke="#555" /><rect x="19" y="21.500" width="7" height="2" fill="#222" /></I>
      <I><rect x="1" y="5" width="30" height="25" fill="url(#tile)" stroke="#8a93a8" /><path d="M1 30H31V5" stroke="#334" strokeWidth="1.500" fill="none" /><g fill="#fff" stroke="#888" strokeWidth=".8"><rect x="6" y="9" width="8" height="7.500" /><rect x="15.500" y="9" width="7.500" height="7.500" /><rect x="6" y="18" width="8" height="7.500" /><rect x="15.500" y="18" width="7.500" height="7.500" /></g><path d="M7.500 10.800H12.500M7.500 14.800H12.500" stroke="#073b73" /><path d="M17.800 11.200H21M17.800 14H21M7.500 22H12.500" stroke="#3d55d8" strokeWidth="2" /><circle cx="19.200" cy="21.700" r="2" fill="#9ac" stroke="#36c" strokeWidth="1.200" /></I>
      <I><g fill="#eaf6ff" stroke="#5a93b8" strokeWidth=".9"><path d="M9 3H29V14H9Z" /><path d="M6.500 6H27V17H6.500Z" /><path d="M4 9H24.500V19H4Z" /></g><path d="M30 11V24L26 28.500V17Z" fill="#1321a4" /><rect x="2" y="16.500" width="24" height="12.500" fill="#2238d4" /><rect x="9.500" y="20" width="7.500" height="3" fill="#fff" /></I>
      <I><Tile><path d="M10.500 6H8.500V11Q8.500 16 12.500 16Q16.500 16 16.500 11V6H14.500" stroke="#444" strokeWidth="1.800" fill="none" /><path d="M12.500 16V21Q12.500 24.500 16.500 24.500Q20.500 24.500 21 20.500" stroke="#222" strokeWidth="2" fill="none" /><circle cx="22.500" cy="19" r="2.200" fill="#ddd" stroke="#444" strokeWidth="1.200" /></Tile></I>
      <I><Tile>{[7, 11, 15, 19, 23].map((y) => <path key={y} d={`M5 ${y}H27.500`} stroke="#666a78" strokeWidth="1.700" strokeDasharray="6.500 1.500" />)}</Tile></I>
      <I><Tile w={26} h={22} /><rect x="2" y="3" width="26" height="3" fill="#073b73" /><path d="M3 4.500H7" stroke="#fff" strokeDasharray="1 1" /><rect x="2" y="23.500" width="9" height="2" fill="#073b73" /><circle cx="20.500" cy="20.500" r="9" fill="#cfe0fb" stroke="#1b4a98" strokeWidth="1.400" /><path d="M11.500 20.500H29.500M20.500 11.500V29.500M13 15.500H28M13 25.500H28" stroke="#1b4a98" fill="none" /><ellipse cx="20.500" cy="20.500" rx="4.500" ry="9" fill="none" stroke="#1b4a98" /></I>
      <I><g fill="none" strokeWidth="5.500"><path d={arc(-180, -92, 11)} stroke="#dd6a55" /><path d={arc(-90, -2, 11)} stroke="#3ea852" /><path d={arc(0, 88, 11)} stroke="#eecb3a" /><path d={arc(90, 178, 11)} stroke="#4d78c4" /></g><circle cx="16" cy="16" r="13.800" fill="none" stroke="#777" strokeOpacity=".6" /><circle cx="16" cy="16" r="8.500" fill="#e4ecf8" /><path d="M12.500 10.500L21 16L12.500 21.500Z" fill="#123a78" /></I>
    </>
  );
}

function PaletteHeader({ open, focus, children }) {
  return (
    <div className="flex h-6 shrink-0 border-b border-t-[3px] border-b-[#777] border-t-[#9b9b9b] bg-gradient-to-b from-[#ececec] to-[#cecece]">
      <div className="flex w-[21px] items-center border-r border-[#777] pl-[5px]">
        {open ? (
          <svg className="h-[7px] w-[10px]" viewBox="0 0 10 7"><path d="M1 1L5 5L9 1" stroke="#111" strokeWidth="2.200" fill="none" /></svg>
        ) : (
          <svg className="h-[10px] w-[7px]" viewBox="0 0 7 10"><path d="M1 1L5 5L1 9" stroke="#111" strokeWidth="2.400" fill="none" /></svg>
        )}
      </div>
      <div className={"my-px flex items-center whitespace-nowrap border pl-[3px] pr-[6px] pt-px text-[13px] font-semibold tracking-[0.08px] text-[#111] " + (focus ? "border-dotted border-[#555]" : "border-transparent")}>{children}</div>
    </div>
  );
}

function Palette({ className, children }) {
  return <div className={"grid grid-cols-[repeat(6,32px)] content-start gap-x-[18px] gap-y-[13px] bg-[#efefef] pl-3 pt-[3px] " + className}>{children}</div>;
}

function Toolbox() {
  return (
    <div className="flex w-[320px] flex-col">
      <div className="flex h-6 shrink-0 items-center bg-[#b0b0b0] pl-[5px] pr-2 pt-px text-[13px] font-semibold tracking-[0.15px] text-white">
        Toolbox
        <div className="ml-auto flex items-center gap-[8px]">
          <RestoreGlyph />
          <svg className="h-[11px] w-[11px]" viewBox="0 0 11 11" shapeRendering="crispEdges"><path d="M.5 0V11M2.500 0V11M4.500 0V11M6.500 0V11M10.500 0V11M6 .5H11M6 10.500H11" stroke="#fff" strokeOpacity=".85" /></svg>
          <svg className="h-3 w-[6px]" viewBox="0 0 6 12"><path d="M0 0L6 6L0 12Z" fill="#fff" /></svg>
        </div>
      </div>
      <div className="h-[3px] shrink-0 bg-[#2d344b]" />
      <div className="flex h-[25px] shrink-0 items-center border-b border-[#777] bg-gradient-to-b from-white to-[#dedede] pl-[5px] pt-[3px] text-[13px] font-semibold tracking-[0.08px] text-[#111]">Options</div>
      <div className="flex h-[27px] shrink-0 items-center bg-[#ebebeb] pl-[7px] pr-[5px]">
        <svg className="h-4 w-4" viewBox="0 0 16 16" shapeRendering="crispEdges"><rect x=".5" y=".5" width="14" height="15" fill="#eef3ff" stroke="#1d4f90" /><rect width="16" height="3" fill="#0b3c78" /><path d="M2 5H14M2 7H14M2 9H14M2 11H14M2 13H14" stroke="#3f62a8" strokeDasharray="3 1" /><path d="M5.500 3V15M10.500 3V15" stroke="#8aa6d8" /><rect y="15" width="16" height="1" fill="#0b3c78" /></svg>
        <div className="ml-[7px] flex h-[19px] w-[120px] justify-between whitespace-nowrap border border-[#909090] pl-[3px] pt-px text-[12px] leading-[16px] tracking-[-0.42px] text-[#8c8c8c]">
          HmiTrendControl
          <div className="-mt-px flex w-4 items-center justify-center border-l border-[#909090]">
            <svg className="h-1 w-[7px]" viewBox="0 0 7 4"><path d="M0 0H7L3.500 4Z" fill="#777" /></svg>
          </div>
        </div>
        <svg className="mb-[2px] ml-auto h-[15px] w-[15px]" viewBox="0 0 15 15"><rect x=".5" y=".5" width="13" height="13" fill="#f4f7ff" stroke="#7c8cc8" /><path d="M1 3H13" stroke="#7c8cc8" /><path d="M0 13.500H14" stroke="#4a63dc" strokeWidth="1.500" /></svg>
      </div>
      <PaletteHeader open>Basic objects</PaletteHeader>
      <Palette className="h-[150px] shrink-0"><BasicObjects /></Palette>
      <PaletteHeader open>Elements</PaletteHeader>
      <Palette className="h-[150px] shrink-0"><Elements /></Palette>
      <PaletteHeader open>Controls</PaletteHeader>
      <Palette className="grow"><Controls /></Palette>
      <PaletteHeader>My controls</PaletteHeader>
      <PaletteHeader focus>Graphics</PaletteHeader>
      <PaletteHeader>Dynamic widgets</PaletteHeader>
    </div>
  );
}

/* ---------- vertical side tabs ---------- */
function SideTab({ className, active, icon, children }) {
  return (
    <div className={"flex w-5 flex-col items-center border-y border-r border-[#777] pt-1 " + (active ? "bg-gradient-to-r from-white to-[#e4e4e4] text-black " : "bg-gradient-to-r from-[#dedede] to-[#c8c8c8] text-[#666] ") + className}>
      <svg className="-mt-0.5 h-4 w-4 shrink-0 overflow-visible" viewBox="0 0 16 16">{icon}</svg>
      <span className="mt-[6px] whitespace-nowrap text-[12.500px] font-bold leading-[16px] [writing-mode:vertical-rl]">{children}</span>
    </div>
  );
}

function SideTabs() {
  return (
    <div className="flex w-[23px] flex-col gap-[2px] bg-[#b0b0b0] pt-[30px]">
      <SideTab active className="h-[97px]" icon={<><circle cx="10" cy="7" r="6.500" fill="url(#blue)" /><text x="0" y="15.500" fontSize="14" fill={N}>A</text></>}>Toolbox</SideTab>
      <SideTab className="h-[89px]" icon={<><path d="M4 1.500H16M4 4.500H16M4 7.500H16M10 10.500H16" stroke={N} strokeWidth="1.500" strokeDasharray="1.500 1.500" /><path d="M1 14L6 11.500L11 13L6 16ZM1 10.500L6 8L11 9.500L6 12.500ZM1 7L6 4.500L11 6L6 9Z" fill="#f4c430" stroke="#a87a08" strokeWidth=".7" /></>}>Layout</SideTab>
      <SideTab className="h-[83px]" icon={<><rect x="1" y="1" width="11" height="13" fill="#fff" stroke="#9a7a20" strokeWidth="1.200" /><path d="M3 4.500H10M3 7H10M3 9.500H8" stroke={N} strokeWidth="1.200" /><rect x="4" y="0" width="5" height="2" fill="#333" /><path d="M6.500 11L9.500 14.500L15.500 8" stroke="#1fa02c" strokeWidth="2.200" fill="none" /></>}>Tasks</SideTab>
      <SideTab className="h-[102px]" icon={<><path d="M1 2H7L8 3L9 2H15V12H1Z" fill="#eef2ff" stroke="#3a52d8" strokeWidth="1.500" /><path d="M8 3V14" stroke="#3a52d8" strokeWidth="1.500" /></>}>Libraries</SideTab>
      <SideTab className="h-[96px]" icon={<><rect x="2" y="1" width="11" height="14" fill="#dfe7ff" stroke="#8fa0dd" strokeWidth=".8" /><path d="M4 7H6V5Q7.500 2 9 5V7H11V14H8.500V11H6.500V14H4Z" fill="#2a44d0" /></>}>Add-Ins</SideTab>
    </div>
  );
}

/* ---------- page ---------- */
function TopStrip() {
  return (
    <div className="flex h-1.5 shrink-0 items-start bg-[#cbcbcb] pl-[55px]">
      <div className="h-px w-[120px] border-t border-dashed border-[#aaa]" />
      <div className="ml-[170px] h-px w-[130px] border-t border-dashed border-[#8a94a8]" />
      <div className="ml-[50px] h-px w-4 bg-[#777]" />
      <div className="ml-2 h-[3px] w-[120px] border-x border-b border-[#888] bg-white" />
      <div className="ml-[15px] h-[3px] w-[5px] bg-[#17174e]" />
      <div className="ml-px h-[3px] w-[5px] bg-[#17174e]" />
    </div>
  );
}

export default function App() {
  return (
    <div className={"relative flex h-[914px] w-[1602px] flex-col overflow-hidden bg-[#1a1e2e] " + FONT}>
      <Defs />
      <TopStrip />
      <div className="mt-px flex h-[905px] shrink-0">
        <div className="flex w-[3px] flex-col border-r border-white bg-[#d4d4d4]">
          <div className="h-[100px] bg-[#c0c0c0]" />
          <div className="mt-auto h-[25px] border-t-[3px] border-[#1a1e2e]" />
        </div>
        <div className="ml-[3px] flex w-[1249px] flex-col">
          <TitleBar />
          <div className="h-[3px] shrink-0 bg-[#f4f4f4]" />
          <div className="h-[25px] shrink-0 border-b border-[#777] bg-[#cbcbcb]" />
          <EditorToolbar />
          <div className="flex h-[568px] shrink-0"><Canvas /><VScroll /></div>
          <HScroll />
          <div className="h-[3px] shrink-0 bg-[#1a1e2e]" />
          <Inspector />
        </div>
        <div className="w-[3px]" />
        <Toolbox />
        <div className="w-px" />
        <SideTabs />
      </div>
      {/* drag hint: highlighted palette item and arrow to the canvas */}
      <svg className="absolute left-[1190px] top-[440px] h-[70px] w-[180px]" viewBox="1190 440 180 70">
        <rect x="1311.300" y="450.300" width="48.400" height="49.400" fill="none" stroke="#62c544" strokeWidth="4.600" />
        <path d="M1208 459L1314 476" stroke="#62c544" strokeWidth="8" />
        <circle cx="1314" cy="476" r="1" fill="#62c544" />
        <path d="M1194 456.500L1221.500 447.300Q1224.500 448.500 1222.500 451L1211 455.500V462.500L1219.500 471.500Q1219 475.500 1216 474Z" fill="#62c544" />
      </svg>
    </div>
  );
}
